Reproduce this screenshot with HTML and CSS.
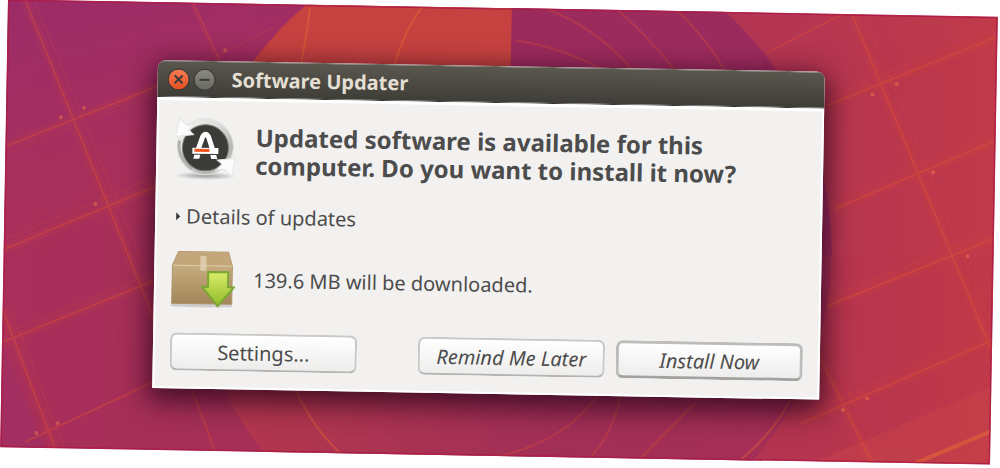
FILE: index.html
```html
<!DOCTYPE html>
<html lang="en">
<head>
  <meta charset="UTF-8" />
  <meta name="viewport" content="width=device-width, initial-scale=1.0"/>
  <title>Software Updater</title>
  <link rel="stylesheet" href="styles.css">
</head>
<body>
  <div class="desktop">
    <!-- Wallpaper -->
    <svg class="wallpaper" viewBox="0 0 990 448" preserveAspectRatio="none" aria-hidden="true">
      <defs>
        <linearGradient id="base" x1="0" y1="0" x2="1" y2="0">
          <stop offset="0" stop-color="#a92f5b"/>
          <stop offset=".2" stop-color="#a53058"/>
          <stop offset=".8" stop-color="#b53652"/>
          <stop offset="1" stop-color="#c03a4a"/>
        </linearGradient>
        <linearGradient id="corner" x1="0" y1="0" x2=".25" y2="1">
          <stop offset="0" stop-color="#9c2c68"/>
          <stop offset=".3" stop-color="#a42f60"/>
          <stop offset=".55" stop-color="#ae3359" stop-opacity="0"/>
        </linearGradient>
        <linearGradient id="low" x1="0" y1="0" x2="1" y2="0">
          <stop offset="0" stop-color="#bd3a49"/>
          <stop offset=".3" stop-color="#b03650"/>
          <stop offset=".55" stop-color="#a23058"/>
          <stop offset="1" stop-color="#a83056"/>
        </linearGradient>
        <clipPath id="disc"><circle cx="508" cy="242" r="320"/></clipPath>
      </defs>
      <rect width="990" height="448" fill="url(#base)"/>
      <rect width="400" height="448" fill="url(#corner)"/>
      <path d="M0 345 45 448H0z" fill="#9c3065" opacity=".5"/>
      <path d="M815 448 990 370v78z" fill="#c8434a" opacity=".5"/>
      <g clip-path="url(#disc)">
        <path d="M0-90h504v332H0z" fill="#c64241"/>
        <path d="M504-90h400v332H504z" fill="#9c2b5d"/>
        <path d="M0 242h990v330H0z" fill="url(#low)"/>
      </g>
      <g fill="none" stroke="#e2572b" stroke-width="2" opacity=".3">
        <path d="M302 3Q300 30 290 80M415 0Q398 20 386 64" stroke="#ff7c20"/>
        <path d="M508 32Q555 38 600 62M538 0Q590 18 628 62M610 0Q645 30 670 62M670 0Q700 28 720 62"/>
        <path d="M790 385Q775 418 740 448" stroke="#ff7c20"/>
        <path d="M292 378Q305 415 340 448" stroke="#ff7c20"/>
        <path d="M190 385 215 448M620 380Q615 420 590 448M705 380 640 448M500 448Q570 430 600 380"/>
      </g>
      <!-- Wide glow under each ray, then the ray itself -->
      <g fill="none" stroke="#ea5b2c" stroke-width="10" opacity=".08">
        <path d="M17 0 152 318M0 147 152 84M0 250 152 184M0 343 152 278M0 310 55 448"/>
        <path d="M844 0 990 335M820 92 990 20M830 195 990 124M825 292 990 222M800 410 990 324M816 340 872 448"/>
      </g>
      <g fill="none" stroke="#ea5b2c" stroke-width="2" opacity=".3">
        <path d="M17 0 152 318M185 0 215 62M0 147 152 84M0 250 152 184M0 343 152 278M25 442 152 380M0 310 55 448"/>
        <path d="M844 0 990 335M820 92 990 20M830 195 990 124M825 292 990 222M800 410 990 324M816 340 872 448M760 40 835 0"/>
        <path d="M915 448 990 415" stroke="#ff8c24" stroke-width="4"/>
      </g>
      <g fill="none" stroke="#ea5b2c" opacity=".2">
        <path d="M26 0 158 305M0 155 152 92M0 240 152 174M0 335 152 270M8 310 64 448M200 58 265 24M182 0 212 62"/>
        <path d="M856 0 990 310M820 84 990 12M830 187 990 116M825 284 990 214M800 402 990 316M825 335 884 448"/>
      </g>
      <g fill="#ff8a4a" opacity=".4">
        <circle cx="55" cy="117" r="2"/><circle cx="78" cy="107" r="2"/><circle cx="91" cy="203" r="2"/>
        <circle cx="36" cy="433" r="2"/><circle cx="57" cy="423" r="2"/><circle cx="218" cy="47" r="2"/>
        <circle cx="890" cy="69" r="2"/><circle cx="866" cy="80" r="2"/><circle cx="928" cy="157" r="2"/>
        <circle cx="964" cy="240" r="2"/><circle cx="866" cy="384" r="2"/><circle cx="842" cy="396" r="2"/>
      </g>
      <rect x="1" y="1" width="988" height="446" fill="none" stroke="#ae1a45" stroke-width="1"/>
    </svg>

    <main class="window">
      <header class="titlebar">
        <button class="control close" aria-label="Close">
          <svg viewBox="0 0 20 20"><path d="M6 6l8 8M14 6l-8 8"/></svg>
        </button>
        <button class="control minimize" aria-label="Minimize">
          <svg viewBox="0 0 20 20"><path d="M5 10h10"/></svg>
        </button>
        <span class="title">Software Updater</span>
      </header>

      <div class="content">
        <div class="row">
          <svg class="icon" viewBox="0 0 64 64" aria-hidden="true">
            <defs>
              <linearGradient id="ring" x1="0" y1="0" x2="1" y2="1">
                <stop offset="0" stop-color="#f4f4f3"/>
                <stop offset=".4" stop-color="#dededd"/>
                <stop offset=".75" stop-color="#b4b4b2"/>
                <stop offset="1" stop-color="#f4f4f3"/>
              </linearGradient>
              <radialGradient id="ground">
                <stop offset="0" stop-color="#777" stop-opacity=".7"/>
                <stop offset="1" stop-color="#777" stop-opacity="0"/>
              </radialGradient>
            </defs>
            <ellipse cx="32" cy="59" rx="31" ry="4" fill="url(#ground)"/>
            <circle cx="32" cy="30" r="28" fill="url(#ring)" stroke="#e2e2e0"/>
            <path d="M6 24a27 27 0 0 0 13 28" fill="none" stroke="#b2b2b0" stroke-width="3"/>
            <path d="M10 24a23 23 0 0 0 13 26" fill="none" stroke="#fff" stroke-width="2"/>
            <circle cx="32" cy="31" r="23" fill="#3b3b38" stroke="#777775"/>
            <path d="M6 2 2 20l18-2-5-5 5-5-7 1z" fill="#fcfcfc" stroke="#e6e6e4"/>
            <path d="M59 59 62 41l-18 2 5 4-6 6 8-1z" fill="#fcfcfc" stroke="#e6e6e4"/>
            <path d="M25 32l4-12q3-5 6 0l4 12" fill="none" stroke="#fff" stroke-width="5"/>
            <path d="M19 31h26v6H19z" fill="#fff"/>
            <path d="M20 42l1-4h6l-1 4zM44 42l-1-4h-6l1 4z" fill="#fff"/>
            <path d="M21 32h15v3H21z" fill="#ef5621"/>
          </svg>
          <h1>Updated software is available for this computer. Do you want to install it now?</h1>
        </div>

        <details class="updates">
          <summary>Details of updates</summary>
        </details>

        <div class="row download">
          <svg class="icon" viewBox="0 0 64 60" aria-hidden="true">
            <defs>
              <linearGradient id="box" x1="0" y1="0" x2="0" y2="1">
                <stop offset="0" stop-color="#d2b98c"/>
                <stop offset="1" stop-color="#a3865a"/>
              </linearGradient>
              <linearGradient id="arrow" x1="0" y1="0" x2="0" y2="1">
                <stop offset="0" stop-color="#dcec6a"/>
                <stop offset="1" stop-color="#8fb928"/>
              </linearGradient>
            </defs>
            <path d="M0 54h61v4q-30 1-61 0z" fill="#999" opacity=".4"/>
            <path d="M7 3h50l4 14v38H1V17z" fill="url(#box)" stroke="#ad9268"/>
            <path d="M7 3h50l4 13H2z" fill="#c3a67a"/>
            <path d="M2 17h59" stroke="#e0cba4"/>
            <path d="M29 7h6v15h-6z" fill="#e6d8bd" opacity=".7"/>
            <path d="M37 23h20v15h6L47 57 31 38h6z" fill="url(#arrow)" stroke="#7aa634" stroke-width="2"/>
          </svg>
          <p>139.6 MB will be downloaded.</p>
        </div>

        <div class="actions">
          <button class="button">Settings...</button>
          <button class="button later">Remind Me Later</button>
          <button class="button install">Install Now</button>
        </div>
      </div>
    </main>
  </div>
</body>
</html>
```
FILE: styles.css
```css
* {
  box-sizing: border-box;
}

body {
  margin: 0;
  padding: 8px 6px 12px 4px;
  min-height: 100vh;
  display: flex;
  background-color: white;
  color: #4c4c4c;
  font-family: "Noto Sans", "Open Sans", sans-serif;
  overflow: hidden;
}

.desktop {
  position: relative;
  flex: 1;
  padding: 58px 172px 56px 151px;
  background-color: #ac325a;
  transform: rotate(1deg);
}

.wallpaper {
  position: absolute;
  top: 0;
  left: 0;
  width: 100%;
  height: 100%;
}

.window {
  position: relative;
  border-radius: 8px 8px 0 0;
  background-color: #f2f1f0;
  box-shadow: 0 8px 28px 4px rgba(30, 0, 20, 0.75);
}

.titlebar {
  display: flex;
  align-items: center;
  gap: 4px;
  height: 37px;
  padding: 0 10px;
  border-radius: 8px 8px 0 0;
  border-top: 1px solid #68675e;
  border-bottom: 1px solid #33322e;
  background: linear-gradient(#5a574e, #3e3d38);
}

.control {
  width: 22px;
  height: 22px;
  padding: 0;
  border: 1px solid #3a3935;
  border-radius: 50%;
  background: linear-gradient(#8a8982, #696862);
}

.control svg {
  display: block;
  width: 20px;
  height: 20px;
  fill: none;
  stroke: #3c3b37;
  stroke-width: 2;
}

.close {
  background: linear-gradient(#f47c56, #e5501f);
}

.title {
  margin-left: 12px;
  color: #e4dfd3;
  font-size: 20px;
  font-weight: bold;
}

.content {
  padding: 16px 15px;
  border: 2px solid white;
  border-top-width: 3px;
}

.row {
  display: flex;
  align-items: center;
  gap: 18px;
}

.icon {
  flex: none;
  width: 64px;
}

h1 {
  margin: 4px 0 0;
  max-width: 500px;
  font-size: 24px;
  line-height: 28px;
}

.updates {
  margin-top: 24px;
  font-size: 20px;
  line-height: 24px;
}

summary {
  display: flex;
  align-items: center;
  gap: 6px;
  cursor: pointer;
}

summary::before {
  content: "";
  margin-left: 4px;
  border: 4px solid transparent;
  border-left-color: #333;
  border-right-width: 0;
}

.download {
  margin-top: 20px;
}

.download p {
  margin: 0;
  font-size: 20px;
}

.actions {
  display: flex;
  gap: 11px;
  margin-top: 24px;
}

.button {
  width: 187px;
  height: 38px;
  padding: 0;
  border: 2px solid #c9c8c6;
  border-bottom-color: #b4b3b1;
  border-radius: 7px;
  background: linear-gradient(white, #eeedec);
  color: #4c4c4c;
  font-family: inherit;
  font-size: 20px;
  cursor: pointer;
}

.later {
  margin-left: auto;
  font-style: italic;
}

.install {
  border: 3px solid #bdbcba;
  border-bottom-color: #a3a2a0;
  font-style: italic;
}
```
